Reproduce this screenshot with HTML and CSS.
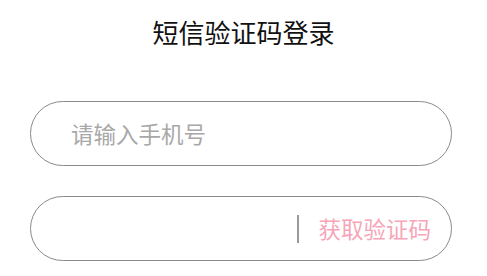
FILE: index.html
```html
<!DOCTYPE html>
<html lang="zh">
<head>
<meta charset="utf-8">
<link rel="stylesheet" href="styles.css">
</head>
<body>
<div class="page">
  <h1 class="title">短信验证码登录</h1>
  <div class="form">
    <div class="field">
      <span class="placeholder">请输入手机号</span>
    </div>
    <div class="field field-code">
      <span class="code-input"></span>
      <span class="divider"></span>
      <span class="get-code">获取验证码</span>
    </div>
  </div>
</div>
</body>
</html>
```
FILE: styles.css
```css
html, body {
  margin: 0;
  padding: 0;
  background: #ffffff;
}
.page {
  width: 487px;
  font-family: "Noto Sans CJK SC", "Noto Sans", sans-serif;
  padding-top: 15px;
}
.title {
  margin: 0;
  font-size: 26px;
  font-weight: normal;
  line-height: 34px;
  text-align: center;
  color: #111;
}
.form {
  margin: 52px 0 0 30px;
  width: 422px;
  display: flex;
  flex-direction: column;
  gap: 30px;
}
.field {
  box-sizing: border-box;
  height: 65px;
  border: 1px solid #8a8a8a;
  border-radius: 33px;
  display: flex;
  align-items: center;
  padding: 0 20px 0 40px;
}
.placeholder {
  font-size: 22.5px;
  color: #a8a8a8;
  line-height: 1;
}
.code-input {
  flex: 1;
}
.divider {
  width: 2px;
  height: 28px;
  background: #9a9a9a;
  margin-right: 19px;
}
.get-code {
  font-size: 22.5px;
  color: #f7a5b8;
  line-height: 1;
}
```
